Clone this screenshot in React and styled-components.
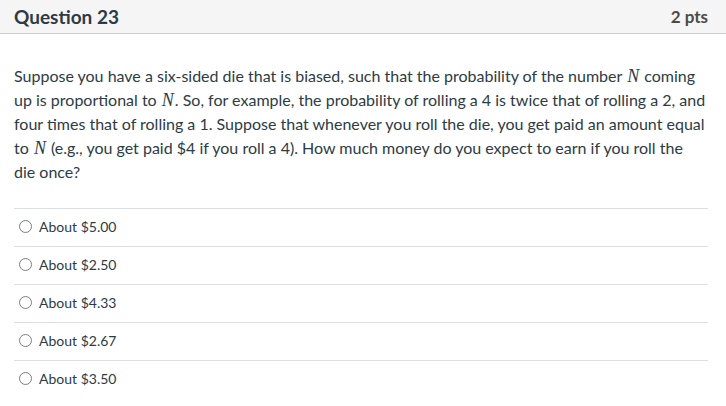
import React from 'react';
import styled, { createGlobalStyle } from 'styled-components';

const answers = ['About $5.00', 'About $2.50', 'About $4.33', 'About $2.67', 'About $3.50'];

const App = () => {
  return (
    <>
      <GlobalStyle />
      <Question>
        <Header>
          <Title>Question 23</Title>
          <Points>2 pts</Points>
        </Header>
        <Body>
          <Text>
            Suppose you have a six-sided die that is biased, such that the probability of the number <MathVar>N</MathVar> coming
            up is proportional to <MathVar>N</MathVar>. So, for example, the probability of rolling a 4 is twice that of rolling a 2, and
            four times that of rolling a 1. Suppose that whenever you roll the die, you get paid an amount equal
            to <MathVar>N</MathVar> (e.g., you get paid $4 if you roll a 4). How much money do you expect to earn if you roll the
            die once?
          </Text>
          <Answers>
            {answers.map((a) => (
              <Answer key={a}>
                <Radio type="radio" name="q23" />
                <AnswerLabel>{a}</AnswerLabel>
              </Answer>
            ))}
          </Answers>
        </Body>
      </Question>
    </>
  );
};

const GlobalStyle = createGlobalStyle`
  body {
    margin: 0;
    background: #fff;
    font-family: Lato, "Helvetica Neue", Arial, sans-serif;
    color: #2d3b45;
  }
`;

const Question = styled.div`
  width: 726px;
  background: #fff;
`;

const Header = styled.div`
  display: flex;
  align-items: center;
  justify-content: space-between;
  height: 33px;
  padding: 0 18px 0 14px;
  background: #f5f5f5;
  border-bottom: 1px solid #c7cdd1;
`;

const Title = styled.h2`
  margin: 0;
  font-size: 19px;
  font-weight: 700;
  color: #2d3b45;
`;

const Points = styled.div`
  font-size: 17px;
  font-weight: 700;
  color: #4a4a4a;
`;

const Body = styled.div`
  padding: 30px 18px 0 14px;
`;

const Text = styled.p`
  margin: 0 0 24px;
  font-size: 16px;
  line-height: 24px;
  color: #2d3b45;
`;

const MathVar = styled.span`
  font-family: "Liberation Serif", "DejaVu Serif", serif;
  font-style: italic;
  font-size: 18px;
  padding: 0 1px;
`;

const Answers = styled.div`
  display: flex;
  flex-direction: column;
`;

const Answer = styled.label`
  display: flex;
  align-items: center;
  gap: 7px;
  height: 37px;
  padding: 0 0 3px 5px;
  box-sizing: border-box;
  border-top: 1px solid #dcdfe1;
  height: 38px;
`;

const Radio = styled.input`
  appearance: none;
  margin: 0;
  width: 13px;
  height: 13px;
  border: 1px solid #7b7f82;
  border-radius: 50%;
  background: #fff;
`;

const AnswerLabel = styled.span`
  font-size: 14px;
  color: #2d3b45;
`;

export default App;
